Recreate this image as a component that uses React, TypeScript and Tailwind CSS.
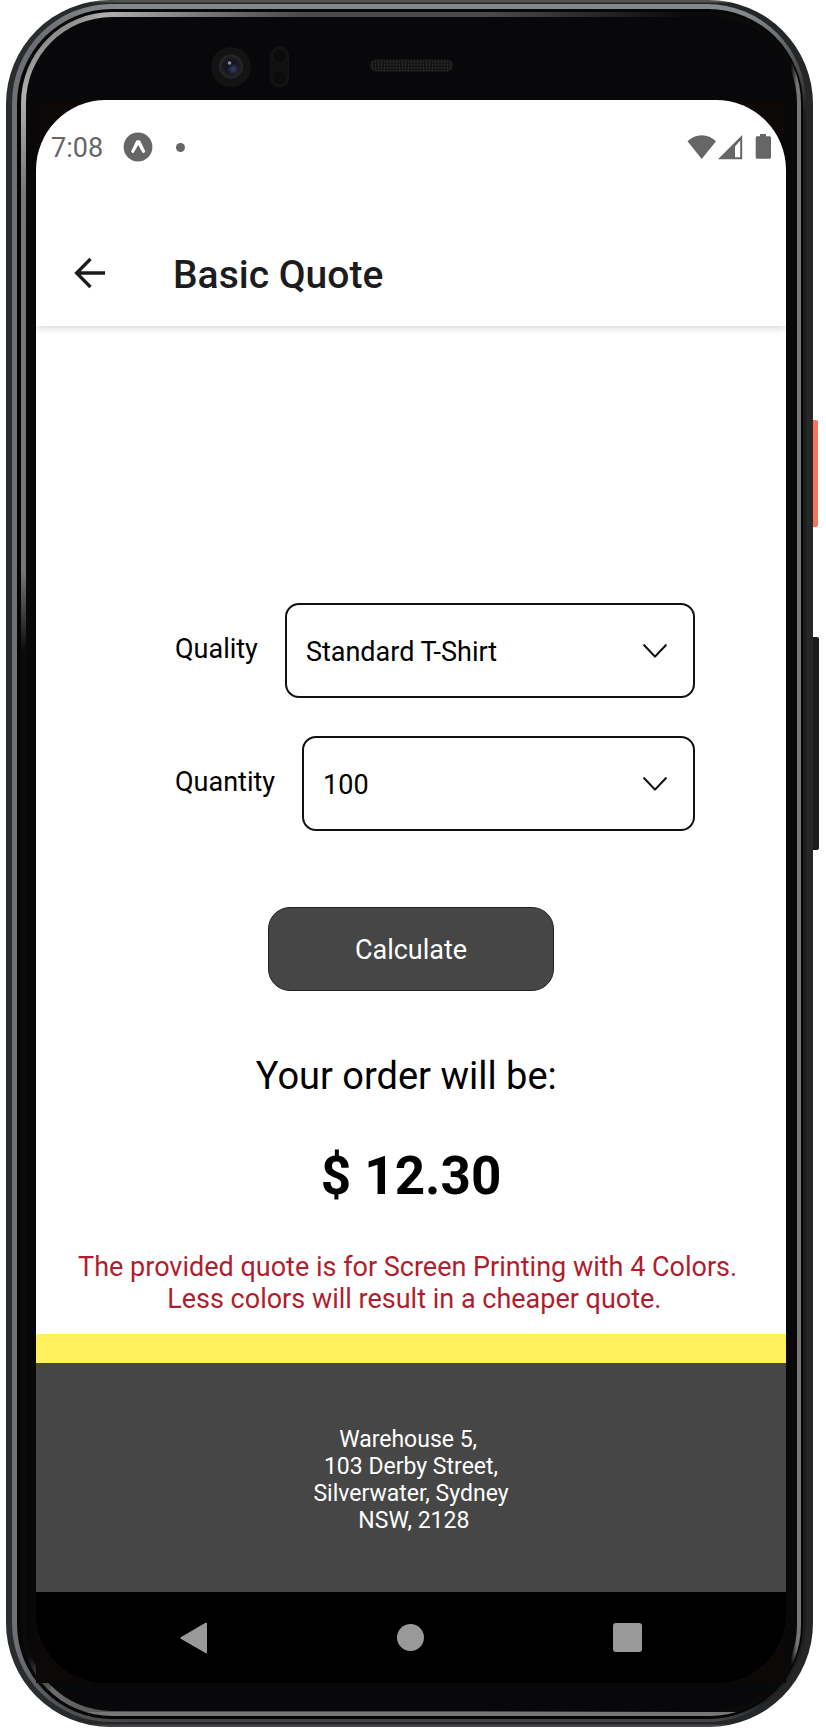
import { useId, useState } from "react";
import type { ReactNode } from "react";

type PickerProps = {
  label: string;
  options: string[];
  value: string;
  onChange: (value: string) => void;
};

function Picker({ label, options, value, onChange }: PickerProps) {
  const id = useId();
  return (
    <div className="flex items-center gap-[27px]">
      <label htmlFor={id} className="pb-[3px] text-[27px] leading-8">
        {label}
      </label>
      <div className="relative min-w-0 flex-1">
        <select
          id={id}
          value={value}
          onChange={(e) => onChange(e.target.value)}
          className="h-[95px] w-full appearance-none rounded-[14px] border-2 border-[#111] bg-white pt-[3px] pr-16 pl-[19px] text-[27px] text-black"
        >
          {options.map((o) => (
            <option key={o}>{o}</option>
          ))}
        </select>
        <svg
          viewBox="0 0 24 14"
          className="pointer-events-none absolute top-1/2 right-7 h-3.5 w-6 -translate-y-1/2"
          fill="none"
          stroke="#111"
          strokeWidth="2.1"
          strokeLinecap="round"
          strokeLinejoin="round"
          aria-hidden="true"
        >
          <path d="M1.2 1.2 12 12.6 22.8 1.2" />
        </svg>
      </div>
    </div>
  );
}

function StatusBar() {
  return (
    <div className="flex items-center bg-white pt-[31px] pr-[15px] pb-[57px] pl-[15px] text-[#666]">
      <span className="pt-0.5 text-[27px] leading-[30px]">7:08</span>
      <svg viewBox="0 0 30 30" className="ml-5 size-[30px]" aria-hidden="true">
        <circle cx="15" cy="15" r="14.4" fill="#666" />
        <path
          d="M14.2 8.2h2c.6 0 .8.3 1.1.9l4.8 9.8c.5 1.1-1.7 2.9-2.6 1.5L15.2 13l-4.3 7.4c-.9 1.4-3.1-.4-2.6-1.5l4.8-9.8c.3-.6.5-.9 1.1-.9Z"
          fill="#fff"
        />
      </svg>
      <span className="ml-[23px] size-[9px] rounded-full bg-[#666]" />
      <svg viewBox="0 0 84 26" className="ml-auto h-[26px] w-[84px]" fill="#666" aria-hidden="true">
        <path d="M0.5 7.2C8.5-.8 21-.8 29 7.2L14.7 25Z" />
        <path fillRule="evenodd" d="M31 25.2 55.2.9V25.2ZM48 12.5V23.2H53.2V6.5Z" />
        <path d="M73 0h6v2.2h3.2c1.2 0 1.800.6 1.800 1.8v19c0 1.2-.6 1.8-1.8 1.8H70.5c-1.2 0-1.8-.6-1.8-1.8V4c0-1.2.6-1.8 1.8-1.8h2.5Z" />
      </svg>
    </div>
  );
}

function Header() {
  return (
    <header className="relative flex h-[106px] items-center gap-[66px] bg-white pl-[37px] shadow-[0_1px_8px_rgba(0,0,0,0.2)] [clip-path:inset(0_0_-12px_0)]">
      <button type="button" aria-label="Back" className="shrink-0">
        <svg viewBox="0 0 34 32" className="h-8 w-[34px]" fill="none" stroke="#1c1c1e" strokeWidth="3.3" aria-hidden="true">
          <path d="M32 16H4M17.5 2 3.6 16l13.9 14" />
        </svg>
      </button>
      <h1 className="pt-[3px] text-[39px] leading-[44px] font-medium text-[#1c1c1e]">Basic Quote</h1>
    </header>
  );
}

function Bezel({ children }: { children: ReactNode }) {
  return (
    <div className="relative rounded-[104px] bg-[linear-gradient(to_right,#2a2d2d_0,#2a2d2d_30px,transparent_120px),linear-gradient(to_bottom,#555653_0,#555653_2px,#242627_3px,#242627_calc(100%-3px),#454547_calc(100%-2px))] pt-1 pr-[7px] pb-[5px] pl-1.5">
      <span className="absolute top-[420px] -right-[5px] h-[107px] w-[5px] rounded-r-[2px] bg-[#f9745c]" />
      <span className="absolute top-[637px] -right-1.5 h-[213px] w-1.5 rounded-r-[2px] bg-[#1c1d1d]" />
      <div className="rounded-[99px] bg-[linear-gradient(to_right,#6e7075_0,#6e7075_5px,transparent_110px),linear-gradient(to_bottom,#85898c_0,#85898c_8px,#1c1e1f_110px,#1c1e1f_calc(100%-20px),#48484a_100%)] pt-[5px] pr-[3px] pb-[3px] pl-[5px]">
        <div className="rounded-[95px] bg-[#060606] pt-[3px] pr-0.5 pb-[3px] pl-1">
          <div className="rounded-[91px] p-[5px] pr-1 [background:linear-gradient(to_bottom,transparent_0,transparent_560px,#0a0a0a_640px,#0a0a0a_calc(100%-60px),transparent_calc(100%-20px))_left/30px_100%_no-repeat,linear-gradient(135deg,transparent_0,transparent_20px,#b0b0b0_60px,#777_130px,transparent_200px),linear-gradient(to_bottom,transparent_50%,#777_calc(100%-4px))_bottom/100%_8px_no-repeat,linear-gradient(to_right,#767676_0,#767676_10px,#4a4a4a_110px,#4a4a4a_60%,#0a0a0a_85%,#0a0a0a_calc(100%-10px),#777_calc(100%-4px))]">
            <div className="rounded-[86px] bg-[#08080a]">{children}</div>
          </div>
        </div>
      </div>
    </div>
  );
}

function Sensors() {
  return (
    <svg viewBox="0 0 260 42" className="h-[42px] w-[260px]" aria-hidden="true">
      <defs>
        <pattern id="mesh" width="3" height="3" patternUnits="userSpaceOnUse">
          <rect width="3" height="3" fill="#151515" />
          <rect width="1" height="2" fill="#2c2c2c" />
        </pattern>
        <radialGradient id="lens">
          <stop offset="0" stopColor="#101014" />
          <stop offset="0.6" stopColor="#16171f" />
          <stop offset="1" stopColor="#29292a" />
        </radialGradient>
        <radialGradient id="glint">
          <stop offset="0" stopColor="#33436f" />
          <stop offset="1" stopColor="#33436f" stopOpacity="0" />
        </radialGradient>
      </defs>
      <circle cx="21" cy="21" r="20" fill="#131313" />
      <circle cx="21" cy="20.5" r="12" fill="url(#lens)" />
      <circle cx="23" cy="23" r="6" fill="url(#glint)" />
      <circle cx="19.5" cy="17" r="1.8" fill="#8c8c94" />
      <rect x="60.5" y="1" width="18" height="40" rx="9" fill="#101010" stroke="#161616" />
      <circle cx="69.5" cy="10" r="7" fill="#0b0b0b" stroke="#161616" />
      <circle cx="69.5" cy="32" r="7" fill="#0b0b0b" stroke="#161616" />
      <rect x="160.5" y="14" width="82" height="11" rx="5.5" fill="url(#mesh)" stroke="#222" />
    </svg>
  );
}

function NavBar() {
  return (
    <nav className="flex h-[91px] items-center justify-between bg-black px-[144px] text-[#999]">
      <button type="button" aria-label="Back">
        <svg viewBox="1 0 28 32" className="h-8 w-7" fill="currentColor" aria-hidden="true">
          <path d="M26.5.8c.9-.4 1.5-.1 1.5.8v28.8c0 .9-.6 1.2-1.5.7L2.2 17.1c-1.1-.6-1.1-1.600 0-2.2Z" />
        </svg>
      </button>
      <button type="button" aria-label="Home">
        <span className="block size-[27px] rounded-full bg-current" />
      </button>
      <button type="button" aria-label="Overview">
        <span className="block size-[29px] rounded-[3px] bg-current" />
      </button>
    </nav>
  );
}

const QUALITIES = ["Standard T-Shirt", "Premium T-Shirt"];
const QUANTITIES = ["100", "200", "500"];

export default function App() {
  const [quality, setQuality] = useState(QUALITIES[0]);
  const [quantity, setQuantity] = useState(QUANTITIES[0]);

  return (
    <div className="min-h-screen bg-white pr-[13px] pb-[3px] pl-1.5 font-[Roboto,sans-serif] text-black">
      <Bezel>
        <div className="h-[83px] pt-[29px] pl-[184px]">
          <Sensors />
        </div>
        <div className="mr-[11px] ml-2.5 bg-[#0c0807]">
          <div className="overflow-hidden rounded-[70px] bg-black">
            <StatusBar />
            <Header />
            <main className="flex flex-col items-center bg-white pt-[277px] pb-[19px]">
              <form className="flex w-full flex-col items-center" onSubmit={(e) => e.preventDefault()}>
                <div className="flex w-full flex-col gap-[38px] pr-[91px] pl-[139px]">
                  <Picker label="Quality" options={QUALITIES} value={quality} onChange={setQuality} />
                  <Picker label="Quantity" options={QUANTITIES} value={quantity} onChange={setQuantity} />
                </div>
                <button
                  type="submit"
                  className="mt-[76px] h-[84px] w-[286px] rounded-[22px] border border-[#222] bg-[#464646] pt-[3px] text-[27px] text-white"
                >
                  Calculate
                </button>
              </form>
              <p className="mt-[63px] text-[38px] leading-[44px]">Your order will be:{"\u00a0"}</p>
              <p className="mt-[46px] text-[53px] leading-[64px] font-bold">$ 12.30</p>
              <p className="mt-[43px] text-center text-[27px] leading-8 text-[#b01e2e]">
                The provided quote is for Screen Printing with 4 Colors.{"\u00a0"}
                <br />
                {"\u00a0"}Less colors will result in a cheaper quote.
              </p>
            </main>
            <footer className="border-t-[29px] border-[#fff05c] bg-[#464646] pt-[63px] pb-[58px] text-center text-white">
              <address className="text-[23px] leading-[27px] not-italic">
                Warehouse 5,{"\u00a0"}
                <br />
                103 Derby Street,
                <br />
                Silverwater, Sydney
                <br />
                {"\u00a0"}NSW, 2128
              </address>
            </footer>
            <NavBar />
          </div>
        </div>
        <div className="h-7" />
      </Bezel>
    </div>
  );
}
